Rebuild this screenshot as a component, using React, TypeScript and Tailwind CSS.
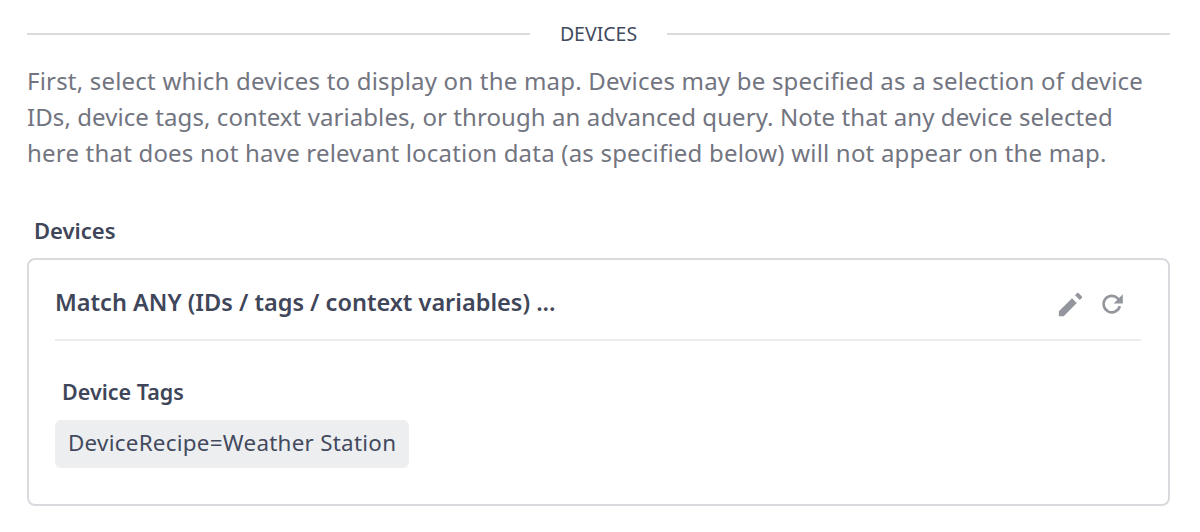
import React from "react";

export default function App() {
  return (
    <div className="w-[1200px] h-[532px] bg-white overflow-hidden pl-[27px] pr-[30px] pt-[20px]" style={{ fontFamily: '"Noto Sans", sans-serif' }}>
      <div className="flex items-center gap-[29.5px] h-[28px]">
        <div className="flex-1 h-[2px] bg-[#d9dbde]" />
        <div className="text-[19.5px] leading-[28px] text-[#434a5e]">DEVICES</div>
        <div className="flex-1 h-[2px] bg-[#d9dbde]" />
      </div>
      <p className="mt-[15px] text-[24px] leading-[36px] text-[#72757f] whitespace-nowrap">
        <span className="tracking-[0.2px]">First, select which devices to display on the map. Devices may be specified as a selection of device</span><br />
        <span className="tracking-[0.08px]">IDs, device tags, context variables, or through an advanced query. Note that any device selected</span><br />
        <span className="tracking-[0.2px]">here that does not have relevant location data (as specified below) will not appear on the map.</span>
      </p>
      <div className="mt-[44px] ml-[7px] text-[22px] leading-[30px] font-semibold text-[#3f4659]">Devices</div>
      <div className="mt-[13px] h-[248px] border-2 border-[#d8dade] rounded-[8px] pl-[26px] pr-[27px]">
        <div className="flex items-center justify-between h-[81px] border-b-2 border-[#ebecee]">
          <div className="text-[23.5px] font-semibold text-[#3f4659] pt-[7px]">Match ANY (IDs / tags / context variables) ...</div>
          <div className="flex items-center gap-[13px] pr-[16px] pt-[9px]">
            <svg width="31" height="31" viewBox="0 0 24 24" fill="#94969e"><path d="M3 17.25V21h3.75L16.9 10.85l-3.75-3.75L3 17.25zM20.71 7.04a1 1 0 0 0 0-1.41l-2.34-2.34a1 1 0 0 0-1.41 0l-1.5 1.5 3.75 3.75 1.5-1.5z" /></svg>
            <svg width="26" height="26" viewBox="0 0 24 24" fill="none"><path d="M19.2 14a7.6 7.6 0 1 1-1.9-7.2L19.5 9" stroke="#94969e" strokeWidth="2.4" /><path d="M22 3v8.5H13.5z" fill="#94969e" /></svg>
          </div>
        </div>
        <div className="ml-[7px] mt-[36px] text-[21.5px] leading-[30px] font-semibold text-[#3f4659]">Device Tags</div>
        <div className="mt-[13px] inline-block h-[48px] rounded-[6px] bg-[#eceef0] px-[13px] text-[22.4px] leading-[46px] tracking-[0.27px] text-[#434a5e]">DeviceRecipe=Weather Station</div>
      </div>
    </div>
  );
}
